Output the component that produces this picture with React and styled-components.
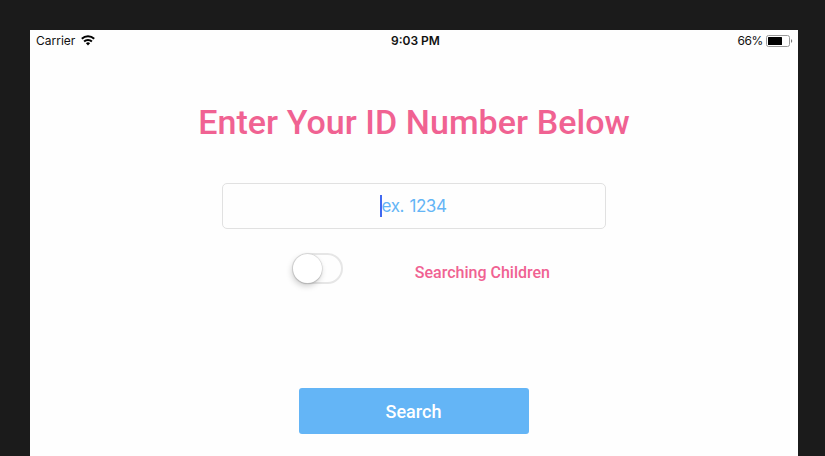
import React from "react";
import styled, { createGlobalStyle } from "styled-components";

const Global = createGlobalStyle`
  * { box-sizing: border-box; }
  html, body { margin: 0; background: #1b1b1b; }
`;
const Stage = styled.div`
  height: 456px;
  padding: 30px 27px 0 30px;
  background: #1b1b1b;
  overflow: hidden;
`;
const Screen = styled.main`
  height: 426px;
  background: #fefefe;
  display: flex;
  flex-direction: column;
  align-items: center;
  font-family: Roboto, sans-serif;
`;
const StatusBar = styled.header`
  width: 100%;
  height: 21px;
  padding: 0 5px 0 6px;
  display: grid;
  grid-template-columns: 1fr auto 1fr;
  align-items: center;
  font: 12px/21px Inter, sans-serif;
  color: #111;
`;
const Group = styled.div`
  display: flex;
  align-items: center;
  gap: ${(p) => p.$gap}px;
  justify-content: ${(p) => (p.$end ? "flex-end" : "flex-start")};
`;
const Percent = styled.span`
  letter-spacing: -0.4px;
`;
const Clock = styled.time`
  padding-left: 2px;
  font-weight: 600;
  font-feature-settings: "case" 1;
`;
const Title = styled.h1`
  margin: 50px 0 0;
  font-size: 34px;
  line-height: 42px;
  font-weight: 500;
  letter-spacing: 0.06px;
  color: #f06292;
  white-space: nowrap;
`;
const Field = styled.div`
  margin-top: 40px;
  width: 384px;
  height: 46px;
  padding-left: 157px;
  border: 1px solid #e1e1e1;
  border-radius: 5px;
  display: flex;
  align-items: center;
  font: 17px/22px Inter, sans-serif;
  letter-spacing: -0.4px;
  word-spacing: 1px;
  color: #64b5f6;
`;
const Caret = styled.span`
  width: 2px;
  height: 22px;
  margin-right: -0.5px;
  background: #4169f0;
`;
const Row = styled.div`
  width: 258px;
  height: 32px;
  margin: 24px 0 0 14px;
  display: flex;
  justify-content: space-between;
`;
const Track = styled.div`
  width: 51px;
  height: 31px;
  border: 2px solid #e6e6e6;
  border-radius: 16px;
`;
const Thumb = styled.div`
  width: 29px;
  height: 29px;
  margin: -1px;
  border-radius: 50%;
  background: #fff;
  box-shadow: 0 0 1px 0.5px #ccc, 0 1px 1px #aaa, -1px 3px 6px #0003;
`;
const Label = styled.span`
  font-size: 16px;
  line-height: 40px;
  font-weight: 500;
  color: #f06292;
  white-space: nowrap;
`;
const Button = styled.button`
  width: 230px;
  height: 46px;
  margin-top: 103px;
  padding: 1px 1px 0 0;
  border: 0;
  border-radius: 3px;
  background: #64b5f6;
  color: #fff;
  font: 500 18px/46px Roboto, sans-serif;
`;

export default function App() {
  return (
    <Stage>
      <Global />
      <Screen>
        <StatusBar>
          <Group $gap={6}>
            <span>Carrier</span>
            <svg width="14" height="11" viewBox="0 0 14 11" fill="none" stroke="#000" strokeWidth="2">
              <path d="M.8 3.8a9 9 0 0 1 12.4 0M3.1 6.5a5.6 5.6 0 0 1 7.8 0" />
              <path d="M7 10.5 4.9 8.3a3 3 0 0 1 4.2 0z" fill="#000" stroke="none" />
            </svg>
          </Group>
          <Clock>9:03 PM</Clock>
          <Group $gap={3} $end>
            <Percent>66%</Percent>
            <svg width="27" height="12" viewBox="0 0 27 12">
              <rect x=".5" y=".5" width="23" height="11" rx="2" fill="none" stroke="#999" />
              <rect x="2" y="2" width="14" height="8" rx=".5" />
              <path d="M25 4q2.5 2 0 4z" fill="#777" />
            </svg>
          </Group>
        </StatusBar>
        <Title>Enter Your ID Number Below</Title>
        <Field><Caret /><span>ex. 1234</span></Field>
        <Row>
          <Track role="switch" aria-checked="false"><Thumb /></Track>
          <Label>Searching Children</Label>
        </Row>
        <Button>Search</Button>
      </Screen>
    </Stage>
  );
}
